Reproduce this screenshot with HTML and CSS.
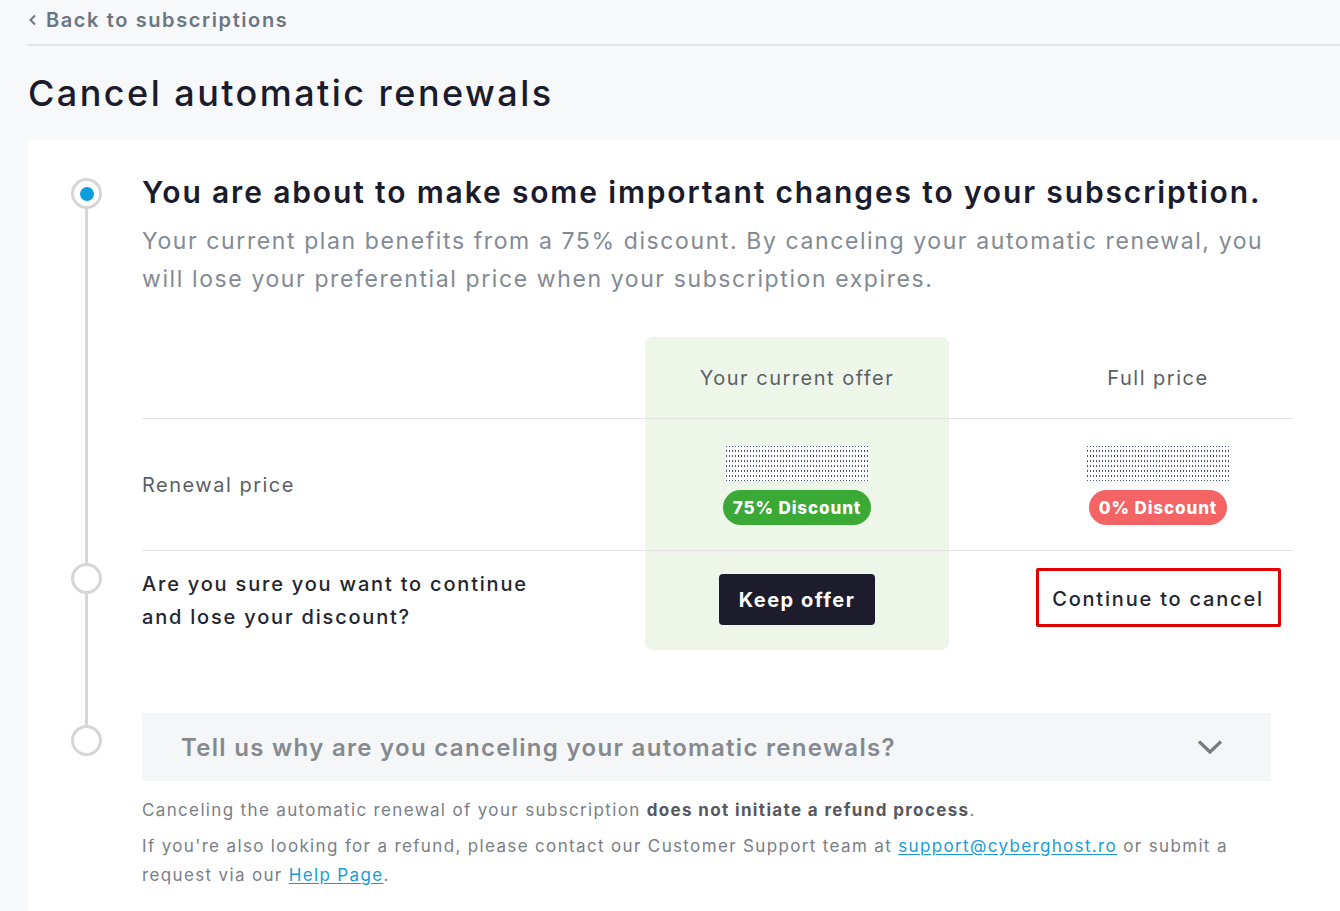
FILE: index.html
```html
<!DOCTYPE html>
<html lang="en">

<head>
    <meta charset="UTF-8">
    <meta name="viewport" content="width=device-width, initial-scale=1.0">
    <title>Cancel automatic renewals</title>
    <link rel="stylesheet" href="styles.css">
</head>

<body>
    <div class="page">
        <!-- Top navigation -->
        <a class="back-link" href="#">
            <svg width="10" height="12" viewBox="0 0 10 12"><path d="M7 1.5 L2.5 6 L7 10.5" fill="none" stroke="#6b7684" stroke-width="2"/></svg>
            Back to subscriptions
        </a>
        <h1 class="page-title">Cancel automatic renewals</h1>

        <div class="card">
            <!-- Step 1: offer comparison -->
            <div class="intro">
                <span class="step-mark step-mark-active"><span class="step-dot"></span></span>
                <h2>You are about to make some important changes to your subscription.</h2>
                <p class="lead">Your current plan benefits from a 75% discount. By canceling your automatic renewal, you will lose your preferential price when your subscription expires.</p>
            </div>

            <div class="offer-table">
                <div class="offer-highlight"></div>

                <div class="cell cell-label"></div>
                <div class="cell cell-head">Your current offer</div>
                <div class="cell cell-head cell-full">Full price</div>

                <div class="cell cell-label row-price">Renewal price</div>
                <div class="cell cell-price row-price">
                    <span class="price-mask"></span>
                    <span class="badge badge-green">75% Discount</span>
                </div>
                <div class="cell cell-price cell-full row-price">
                    <span class="price-mask"></span>
                    <span class="badge badge-red">0% Discount</span>
                </div>

                <div class="cell cell-label cell-question">
                    <span class="step-mark"></span>
                    Are you sure you want to continue<br>and lose your discount?
                </div>
                <div class="cell cell-action">
                    <button class="btn btn-keep">Keep offer</button>
                </div>
                <div class="cell cell-action cell-full">
                    <button class="btn btn-continue">Continue to cancel</button>
                </div>
            </div>

            <!-- Step 2: reason -->
            <div class="reason">
                <span class="step-mark"></span>
                <span>Tell us why are you canceling your automatic renewals?</span>
                <svg width="26" height="16" viewBox="0 0 26 16"><path d="M2 2.5 L13 13 L24 2.5" fill="none" stroke="#7b7b7b" stroke-width="3.2"/></svg>
            </div>

            <div class="notes">
                <p>Canceling the automatic renewal of your subscription <strong>does not initiate a refund process</strong>.</p>
                <p>If you're also looking for a refund, please contact our Customer Support team at <a href="#">support@cyberghost.ro</a> or submit a request via our <a href="#">Help Page</a>.</p>
            </div>
        </div>
    </div>
</body>

</html>
```

FILE: styles.css
```css
/* General page styling */
body {
    margin: 0;
    padding: 0;
    background-color: #f7f8fa;
    font-family: Inter, "Noto Sans", sans-serif;
    color: #1a1b2c;
    overflow: hidden;
}

.page {
    padding-left: 28px;
}

/* Back link and title */
.back-link {
    display: flex;
    align-items: center;
    gap: 8px;
    height: 46px;
    padding-bottom: 4px;
    box-sizing: border-box;
    border-bottom: 2px solid #e3e4e7;
    color: #6b7684;
    font-size: 20px;
    font-weight: 600;
    letter-spacing: 1.6px;
    text-decoration: none;
}

.page-title {
    margin: 0;
    height: 94px;
    display: flex;
    align-items: center;
    font-size: 36px;
    font-weight: 500;
    letter-spacing: 2.45px;
}

/* White card with stepper rail */
.card {
    position: relative;
    background-color: #fff;
    padding: 32px 47px 40px 114px;
    min-height: 800px;
}

.card::before {
    content: "";
    position: absolute;
    left: 57px;
    top: 53px;
    width: 3px;
    height: 544px;
    background-color: #d6d6d6;
}

.step-mark {
    position: absolute;
    left: -71px;
    top: 12px;
    width: 25px;
    height: 25px;
    border: 3px solid #d6d6d6;
    border-radius: 50%;
    background-color: #fff;
    display: flex;
    align-items: center;
    justify-content: center;
}

.step-dot {
    width: 14px;
    height: 14px;
    border-radius: 50%;
    background-color: #0e9ddc;
}

/* Intro */
.intro {
    position: relative;
}

.intro .step-mark {
    top: 6px;
}

h2 {
    margin: 0;
    font-size: 30px;
    line-height: 40px;
    font-weight: 600;
    letter-spacing: 1.85px;
}

.lead {
    margin: 10px 0 0;
    font-size: 23px;
    line-height: 38px;
    letter-spacing: 1.6px;
    color: #828a93;
}

/* Offer comparison table */
.offer-table {
    position: relative;
    margin-top: 39px;
    display: grid;
    grid-template-columns: 503px 304px 1fr;
    grid-template-rows: 81px 133px 99px;
}

.offer-highlight {
    position: absolute;
    left: 503px;
    top: 0;
    width: 304px;
    height: 313px;
    border-radius: 8px;
    background-color: #eef6ea;
}

.cell {
    position: relative;
    display: flex;
    flex-direction: column;
    align-items: center;
    justify-content: center;
    font-size: 20px;
    letter-spacing: 1.5px;
    color: #5a5f66;
}

.cell-full {
    padding-left: 74px;
}

.cell-label {
    align-items: flex-start;
}

.row-price {
    border-top: 1px solid #e2e2e2;
    border-bottom: 1px solid #e2e2e2;
}

.cell-price {
    gap: 9px;
    padding-top: 2px;
}

.price-mask {
    width: 145px;
    height: 35px;
    background:
        linear-gradient(#fff 3px, transparent 3px) 0 1px / 3px 5px,
        linear-gradient(90deg, #46557a 1px, #fff 1px) 1px 0 / 3px 5px;
}

.badge {
    height: 35px;
    padding: 0 10px;
    display: flex;
    align-items: center;
    border-radius: 18px;
    color: #fff;
    font-size: 17px;
    font-weight: 800;
    letter-spacing: 0.9px;
}

.badge-green {
    background-color: #3aa935;
}

.badge-red {
    background-color: #f46464;
}

.cell-question {
    line-height: 33px;
    font-weight: 500;
    letter-spacing: 1.8px;
    color: #22252e;
    padding-top: 2px;
    padding-bottom: 2px;
}

.cell-action {
    padding-bottom: 2px;
}

.btn {
    font-family: inherit;
    font-size: 20px;
    cursor: pointer;
}

.btn-keep {
    width: 156px;
    height: 51px;
    border: none;
    border-radius: 4px;
    background-color: #1c1c2c;
    color: #fff;
    font-weight: 700;
    letter-spacing: 1.5px;
}

.btn-continue {
    width: 245px;
    height: 59px;
    margin-top: -5px;
    padding-top: 5px;
    border: 3px solid #e30000;
    border-radius: 2px;
    background-color: #fff;
    color: #22252e;
    font-weight: 500;
    letter-spacing: 1.8px;
}

/* Reason accordion */
.reason {
    position: relative;
    margin: 63px 22px 0 0;
    height: 68px;
    padding: 0 48px 0 39px;
    display: flex;
    align-items: center;
    justify-content: space-between;
    background-color: #f5f6f8;
    color: #86898e;
    font-size: 24px;
    font-weight: 600;
    letter-spacing: 1.3px;
}

/* Footer notes */
.notes {
    margin-top: 15px;
    font-size: 17px;
    line-height: 29px;
    letter-spacing: 1.35px;
    color: #7a7e85;
}

.notes p {
    margin: 0 0 7px;
}

.notes strong {
    color: #55585e;
    font-weight: 700;
}

.notes a {
    color: #1a9bd7;
    text-underline-offset: 2px;
}
```
